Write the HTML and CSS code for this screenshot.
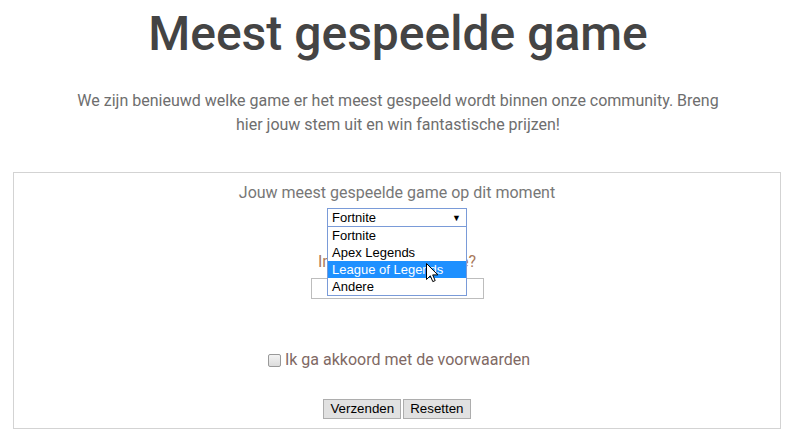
FILE: index.html
```html
<!DOCTYPE html>
<html lang="nl">
<head>
<meta charset="utf-8">
<title>Meest gespeelde game</title>
<link rel="stylesheet" href="styles.css">
</head>
<body>
<h1 class="title">Meest gespeelde game</h1>
<p class="intro">We zijn benieuwd welke game er het meest gespeeld wordt binnen onze community. Breng hier jouw stem uit en win fantastische prijzen!</p>
<form class="poll">
  <div class="field-label">Jouw meest gespeelde game op dit moment</div>
  <div class="select-wrap">
    <div class="select"><span>Fortnite</span><span class="arrow">&#9660;</span></div>
    <ul class="options">
      <li>Fortnite</li>
      <li>Apex Legends</li>
      <li class="active">League of Legends</li>
      <li>Andere</li>
    </ul>
    <svg class="cursor" width="13" height="20" viewBox="0 0 13 20"><path d="M0.5 0.5 L0.5 16.5 L4.3 12.8 L6.8 18.6 L9.2 17.6 L6.7 11.9 L11.8 11.9 Z" fill="#fff" stroke="#000" stroke-width="1"/></svg>
  </div>
  <label class="q-label">In welke stad woon je?</label>
  <div class="text-input"></div>
  <label class="agree"><span class="checkbox"></span>Ik ga akkoord met de voorwaarden</label>
  <div class="buttons"><span class="btn">Verzenden</span><span class="btn">Resetten</span></div>
</form>
</body>
</html>
```
FILE: styles.css
```css
html, body { margin: 0; padding: 0; background: #fff; }
body { font-family: Roboto, "Liberation Sans", sans-serif; width: 796px; height: 439px; overflow: hidden; }
.title { margin: 6px 0 0; font-size: 48px; line-height: 56px; font-weight: 500; color: #444; text-align: center; }
.intro { margin: 27px auto 0; width: 660px; font-size: 16px; line-height: 24px; color: #6e6e6e; text-align: center; }
.poll { margin: 35px 0 0 13px; width: 766px; border: 1px solid #d3d3d3; display: flex; flex-direction: column; align-items: center; padding: 8px 0 9px; }
.field-label { font-size: 16px; line-height: 24px; color: #777; }
.select-wrap { position: relative; margin-top: 3px; width: 140px; }
.select { box-sizing: border-box; height: 19px; border: 1px solid #7a9bd8; display: flex; justify-content: space-between; align-items: center; padding: 0 5px 0 4px; font-family: Arial, "Liberation Sans", sans-serif; font-size: 13px; color: #000; }
.arrow { font-size: 9px; }
.options { position: absolute; left: 0; top: 18px; margin: 0; padding: 0; list-style: none; width: 140px; box-sizing: border-box; border: 1px solid #7a9bd8; background: #fff; font-family: Arial, "Liberation Sans", sans-serif; font-size: 13px; line-height: 17px; color: #000; z-index: 2; }
.options li { padding-left: 4px; height: 17px; }
.options li.active { background: #1e90ff; color: #fff; }
.cursor { position: absolute; left: 99px; top: 55px; z-index: 3; }
.q-label { margin-top: 23px; font-size: 16px; line-height: 24px; color: #a9795a; letter-spacing: -0.1px; }
.text-input { margin-top: 4px; width: 173px; height: 21px; box-sizing: border-box; border: 1px solid #bdbdbd; }
.agree { margin-top: 49px; font-size: 16px; line-height: 24px; color: #806964; display: flex; align-items: center; }
.checkbox { width: 11px; height: 11px; border: 1px solid #999; border-radius: 2px; background: linear-gradient(#f3f3f3, #dcdcdc); margin: 0 4px 0 4px; }
.buttons { margin-top: 27px; display: flex; gap: 2px; }
.btn { box-sizing: border-box; height: 20px; padding: 0 6px; border: 1px solid #adadad; background: #e1e1e1; font-family: Arial, "Liberation Sans", sans-serif; font-size: 13.33px; line-height: 18px; color: #000; }
```
